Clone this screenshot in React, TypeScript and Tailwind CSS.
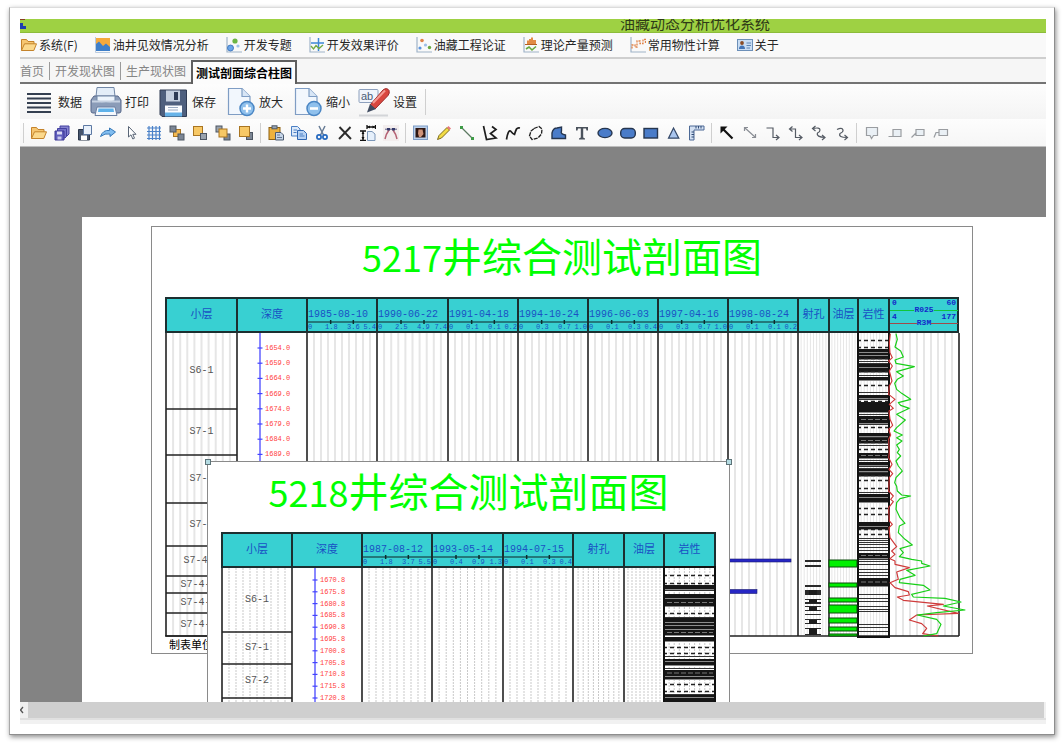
import React from 'react';

/* ---------- menu icons (16 x 16) ---------- */

const Axes = () => <path d="M1 0V15H16" fill="none" stroke="#9fb3c8" strokeWidth="1.2" />;

const FolderShape = () => (
    <>
        <path d="M0.5 13.5V2.5H5.5L7 4.5H13V7" fill="#f6c671" stroke="#c4832b" />
        <path d="M0.5 13.5L3.5 6.8H15.5L12.8 13.5Z" fill="#fbd98d" stroke="#c4832b" />
    </>
);

const menuIcons: Record<string, React.ReactNode> = {
    folder: <FolderShape />,
    wave: (
        <>
            <rect x="1" y="1" width="14" height="13" fill="#f5a93c" />
            <path d="M1 7L4 4.5L8 9L11 6.5L15 10V14H1Z" fill="#3f7fc9" />
            <path d="M0.5 0V15.5H15" fill="none" stroke="#b9cbe0" />
        </>
    ),
    bubbles: (
        <>
            <Axes />
            <circle cx="4.5" cy="11" r="3" fill="#6ba5e8" stroke="#2f6bb8" strokeWidth="0.8" />
            <circle cx="9" cy="4" r="2.6" fill="#6cb544" />
            <circle cx="12" cy="9" r="1.6" fill="#9fc2ea" />
        </>
    ),
    cross: (
        <>
            <Axes />
            <path d="M9.500 1V14M2 6H15" stroke="#3d86d6" strokeWidth="1.5" />
            <path d="M2 9L4.5 12L7 8.5L10 11.5L14 8" fill="none" stroke="#71a944" strokeWidth="1.3" />
        </>
    ),
    dots: (
        <>
            <Axes />
            <circle cx="6" cy="3.5" r="1.8" fill="#e08247" />
            <circle cx="4" cy="11" r="1.6" fill="#5b94dd" />
            <circle cx="9.5" cy="8" r="1.6" fill="#9ebfe6" />
            <circle cx="13.5" cy="10.5" r="1.7" fill="#68a83f" />
        </>
    ),
    bars: (
        <>
            <Axes />
            <path d="M4 7V3.5H6V2H8V0.5H10V3H13V7Z" fill="#e28b45" />
            <path d="M2 7.5H14" stroke="#b35f22" />
            <path d="M3 12L6 10L9 13L13 9.5" fill="none" stroke="#68a83f" strokeWidth="1.6" />
        </>
    ),
    steps: (
        <>
            <Axes />
            <path d="M2 11.5V8H5V10H7V4H10V6.5H13V2.5H15.5V6" fill="none" stroke="#e08247" strokeWidth="1.3" strokeDasharray="2 1" />
        </>
    ),
    card: (
        <>
            <rect x="0.5" y="2.5" width="15" height="11" fill="#c9ddf3" stroke="#6c8fb8" />
            <circle cx="5" cy="6" r="1.9" fill="#8a4b25" />
            <path d="M2 12Q2 8.5 5 8.5Q8 8.5 8 12Z" fill="#4474b5" />
            <path d="M9.5 6H14M9.5 8.5H14M9.5 11H13" stroke="#5d84b4" />
        </>
    ),
};

const menuItems = [
    { icon: 'folder', label: '系统(F)' },
    { icon: 'wave', label: '油井见效情况分析' },
    { icon: 'bubbles', label: '开发专题' },
    { icon: 'cross', label: '开发效果评价' },
    { icon: 'dots', label: '油藏工程论证' },
    { icon: 'bars', label: '理论产量预测' },
    { icon: 'steps', label: '常用物性计算' },
    { icon: 'card', label: '关于' },
];

/* ---------- main toolbar icons (32 x 32) ---------- */

const SheetShape = () => (
    <>
        <path d="M4.5 2.5H18L26 10.5V28.5H4.5Z" fill="#f2f7fd" stroke="#7f9dc4" strokeWidth="1.2" />
        <path d="M18 2.5V10.5H26" fill="#d8e6f6" stroke="#7f9dc4" strokeWidth="1.2" />
        <circle cx="23" cy="22.500" r="7" fill="#8fc0ec" stroke="#4a86c4" strokeWidth="1.5" />
    </>
);

const mainTools = [
    {
        label: '数据',
        icon: <path d="M4 8H28M4 12.500H28M4 17H28M4 21.500H28M4 26H28" stroke="#343f50" strokeWidth="2" />,
    },
    {
        label: '打印',
        icon: (
            <>
                <path d="M7 1.500H24L25.500 15H5.500Z" fill="#e3edf8" stroke="#7187a6" />
                <path d="M4 10H28L31 14V25Q31 27 29 27H3Q1 27 1 25V14Z" fill="#8b9cb8" stroke="#56678a" />
                <path d="M7 10H25V15Q16 18 7 15Z" fill="#edf4fc" stroke="#7187a6" />
                <path d="M2 15.500H30" stroke="#c7d2e2" strokeWidth="2" />
                <path d="M7 21H25L27 29.500H5Z" fill="#f5f9fe" stroke="#6a7fa2" />
                <path d="M8.500 22.500H23.500L24 26H8Z" fill="#5fb2ea" />
            </>
        ),
    },
    {
        label: '保存',
        icon: (
            <>
                <path d="M3 4H29.500V30.500H5L3 28.500Z" fill="#4e5f7e" stroke="#2f3b53" />
                <rect x="9" y="4.500" width="14" height="11" fill="#c5d0e0" />
                <rect x="17" y="6" width="4" height="8" fill="#2e3b55" />
                <path d="M8 19.500H25V30H8Z" fill="#fafcff" />
                <path d="M8 26.500H25V30.500H8Z" fill="#66b3e8" />
                <path d="M11 21.500H21M11 24H21" stroke="#9aaac2" />
            </>
        ),
    },
    {
        label: '放大',
        icon: (
            <>
                <SheetShape />
                <path d="M23 18.500V26.500M19 22.500H27" stroke="#fff" strokeWidth="2.4" />
            </>
        ),
    },
    {
        label: '缩小',
        icon: (
            <>
                <SheetShape />
                <path d="M19 22.500H27" stroke="#fff" strokeWidth="2.6" />
            </>
        ),
    },
    {
        label: '设置',
        icon: (
            <>
                <rect x="1" y="3.500" width="19" height="13" rx="1" fill="#f1f5fb" stroke="#8da0bd" />
                <text x="3" y="14" fontSize="11" fontFamily="Liberation Sans" fill="#4c5c78">ab</text>
                <path d="M12 19L25 4Q29 1 31 4.500Q32 7 30 9.500L17 23Z" fill="#d9473f" stroke="#9c2b2a" />
                <path d="M15 17L27 4.500" stroke="#f59a92" strokeWidth="2" />
                <path d="M12 18L18 23L9 26.500Z" fill="#3f4b60" />
                <path d="M1 29.500H30" stroke="#d3d5d8" strokeWidth="2" />
            </>
        ),
    },
];

/* ---------- drawing toolbar icons (16 x 16) ---------- */

const Stacked: React.FC<{ front: number }> = ({ front }) => (
    <>
        {front === 0 && (
            <>
                <rect x="4.500" y="4.500" width="7" height="7" fill="#f3b951" stroke="#a97521" />
                <rect x="1" y="1" width="6" height="6" fill="#7c8694" stroke="#4d5663" />
                <rect x="9" y="9" width="6" height="6" fill="#7c8694" stroke="#4d5663" />
            </>
        )}
        {front === 1 && (
            <>
                <rect x="1.500" y="1.500" width="9" height="9" fill="#f7c865" stroke="#a97521" />
                <rect x="8.500" y="8.500" width="6" height="6" fill="#9aa3ae" stroke="#4d5663" />
            </>
        )}
        {front === 2 && (
            <>
                <rect x="1" y="1" width="6" height="6" fill="#9aa3ae" stroke="#4d5663" />
                <rect x="9" y="9" width="6" height="6" fill="#7c8694" stroke="#4d5663" />
                <rect x="4" y="4" width="8" height="8" fill="#f7c865" stroke="#a97521" />
            </>
        )}
        {front === 3 && (
            <>
                <rect x="8.500" y="7.500" width="6" height="7" fill="#7c8694" stroke="#4d5663" />
                <rect x="1.500" y="1.500" width="10" height="10" fill="#f7c865" stroke="#a97521" />
            </>
        )}
    </>
);

const blueFill = { fill: '#4a7cc9', stroke: '#26364f', strokeWidth: 1.4 };
const darkLine = { fill: 'none', stroke: '#1d1d1d', strokeWidth: 1.7 };
const linkLine = { fill: 'none', stroke: '#555b64', strokeWidth: 1.2 };
const noteLine = { fill: '#eaf0f5', stroke: '#9a9da1', strokeWidth: 1.2 };

const drawGroups: { name: string; icon: React.ReactNode }[][] = [
    [
        { name: '打开', icon: <FolderShape /> },
        {
            name: '全部保存',
            icon: (
                <>
                    <path d="M6 1H15V9L13 11H6Z" fill="#8583cf" stroke="#4340a0" />
                    <path d="M3.500 3.500H12.500V11.500L11 13H3.500Z" fill="#7270c8" stroke="#4340a0" />
                    <path d="M1 6H10V15H1Z" fill="#5f5dbd" stroke="#3a3794" />
                    <rect x="3" y="6.500" width="5" height="3" fill="#dcdcf5" />
                    <rect x="3.500" y="11.500" width="4" height="3" fill="#c6c6ec" />
                </>
            ),
        },
        {
            name: '另存为',
            icon: (
                <>
                    <path d="M1.500 4.500H12.500V15H1.500Z" fill="#47566e" stroke="#2b3649" />
                    <rect x="4" y="10.500" width="6" height="4.500" fill="#fff" />
                    <path d="M6.500 0.500H14.500V9.500H6.500Z" fill="#e9f1fb" stroke="#5d79a3" />
                </>
            ),
        },
        { name: '重做', icon: <path d="M0.500 11.500Q3 4.500 9.500 5.500V3L15.500 7L10 11.500V9Q5 8 0.500 11.500Z" fill="#80bdf0" stroke="#3779b8" /> },
        { name: '选择', icon: <path d="M5.500 1.500V12L8 9.800L9.800 14L11.500 13.200L9.800 9.300H13Z" fill="#fff" stroke="#5a6677" /> },
        { name: '网格', icon: <path d="M1 3H15M1 6.500H15M1 10H15M1 13.500H15M3 1V15M6.500 1V15M10 1V15M13.500 1V15" stroke="#4b82c9" strokeWidth="1.200" /> },
        { name: '置于底层', icon: <Stacked front={0} /> },
        { name: '上移', icon: <Stacked front={1} /> },
        { name: '下移', icon: <Stacked front={2} /> },
        { name: '置于顶层', icon: <Stacked front={3} /> },
    ],
    [
        {
            name: '粘贴',
            icon: (
                <>
                    <rect x="1" y="2.500" width="11" height="12" fill="#edb13d" stroke="#8e6113" />
                    <rect x="4" y="0.800" width="5" height="3" fill="#9aa7b6" stroke="#4e5966" />
                    <path d="M7.500 7.500H13L15.500 10V15H7.500Z" fill="#c6d5e8" stroke="#4b5a70" />
                    <path d="M9 10H12M9 12.500H14" stroke="#647690" />
                </>
            ),
        },
        {
            name: '复制',
            icon: (
                <>
                    <path d="M0.500 1.500H6.500L9 4V11H0.500Z" fill="#dce9f9" stroke="#4b7fc4" />
                    <path d="M6.500 5.500H12.500L15.500 8.500V14.500H6.500Z" fill="#b7d2f3" stroke="#2f67b3" />
                    <path d="M8.500 9H12M8.500 11H13.500M2.500 5H6M2.500 7.500H5.500" stroke="#4b7fc4" />
                </>
            ),
        },
        {
            name: '剪切',
            icon: (
                <>
                    <path d="M5 1L9.500 10M11 1L6.500 10" stroke="#687c96" strokeWidth="1.500" />
                    <circle cx="5" cy="12" r="2.100" fill="none" stroke="#2468be" strokeWidth="1.700" />
                    <circle cx="11" cy="12" r="2.100" fill="none" stroke="#2468be" strokeWidth="1.700" />
                </>
            ),
        },
        { name: '删除', icon: <path d="M2.500 2L14 14M13.500 2L2 14" stroke="#2c2c2c" strokeWidth="1.900" /> },
        {
            name: '尺寸',
            icon: (
                <>
                    <path d="M7.500 6.500H12L15 9V15.500H7.500Z" fill="#e6f0fb" stroke="#7c97b8" />
                    <path d="M7 0V4M15.500 0V4M7 2H15.500M0 6H6M0 15.500H6M3 6V15.500" stroke="#111" strokeWidth="1.300" />
                    <path d="M7.500 2L10 0.500V3.500ZM15 2L12.500 0.500V3.500ZM3 15L1.500 12H4.500ZM3 6.500L1.500 9H4.500Z" fill="#111" />
                </>
            ),
        },
        {
            name: '节点',
            icon: (
                <>
                    <rect width="16" height="16" fill="#f3eeee" />
                    <path d="M2 14Q3 9 6 5M14 14Q13 9 10 5" fill="none" stroke="#b56173" strokeWidth="1.500" />
                    <path d="M4 3H7V5.500H4ZM9 3H12V5.500H9Z" fill="#353a6a" />
                    <path d="M2 4.200H14" stroke="#353a6a" strokeWidth="0.800" />
                </>
            ),
        },
    ],
    [
        {
            name: '图片',
            icon: (
                <>
                    <rect x="0.500" y="1" width="14" height="13.500" fill="#bcd0ea" stroke="#7d9cc6" />
                    <rect x="2.500" y="3" width="10" height="9.500" fill="#2e1712" />
                    <path d="M5.500 4.500H9.500L10.500 9L8 12H6L5 8.500Z" fill="#cf9379" />
                </>
            ),
        },
        {
            name: '铅笔',
            icon: (
                <>
                    <path d="M1.500 14.500L3 10.500L11 2.500L13.500 5L5.500 13Z" fill="#f2dc45" stroke="#7d6b1d" />
                    <path d="M11 2.500L12.500 1L15 3.500L13.500 5Z" fill="#e8787e" />
                </>
            ),
        },
        {
            name: '直线',
            icon: (
                <>
                    <path d="M2.500 2.500L13.500 13.500" stroke="#5c7a62" strokeWidth="1.300" />
                    <path d="M1 1H4V4H1ZM12 12H15V15H12Z" fill="#3e9b47" />
                </>
            ),
        },
        { name: '折线', icon: <path d="M1.500 1L4.500 14.500L14 13L8.500 8.500L14 4.500L10 1.500" {...darkLine} /> },
        { name: '曲线', icon: <path d="M1.500 14.500Q3 5 5.500 6Q8 9 9.500 9.500Q10.500 6 11.500 4Q12.500 2.500 15 3" {...darkLine} /> },
        { name: '闭合曲线', icon: <path d="M6 3.500L11 1.500L14 4L13.500 9L10 13L4 14.500L1.500 11L3 6Z" {...darkLine} strokeWidth={1.3} strokeDasharray="4 1" /> },
        { name: '多边形', icon: <path d="M1 13.500V8Q2 3 6 3L10.500 2V6Q9 9 14.500 10V13.500Z" {...blueFill} /> },
        { name: '文本', icon: <path d="M2 2H14V5.500H12.500L12 3.500H9.200V12.500L11 13.500V14.500H5V13.500L6.800 12.500V3.500H4L3.500 5.500H2Z" fill="#4b525c" /> },
        { name: '椭圆', icon: <ellipse cx="8" cy="8" rx="7" ry="4.600" {...blueFill} /> },
        { name: '圆角矩形', icon: <rect x="0.700" y="3.500" width="14.600" height="9.500" rx="4" {...blueFill} /> },
        { name: '矩形', icon: <rect x="1" y="3.500" width="13.500" height="9.500" {...blueFill} /> },
        { name: '三角形', icon: <path d="M7.500 3L12.800 13.200H2.500Z" fill="#a9c5ee" stroke="#344868" strokeWidth="1.200" /> },
        {
            name: '标尺',
            icon: (
                <>
                    <path d="M0.500 1H15V5H5V15H0.500Z" fill="#d3e0f2" stroke="#4c6996" />
                    <path d="M7 1V3.500M9.500 1V3.500M12 1V3.500M2.500 7H5M2.500 9.500H5M2.500 12H5" stroke="#2f4a75" />
                </>
            ),
        },
    ],
    [
        {
            name: '箭头',
            icon: (
                <>
                    <path d="M4 4L13.500 13.500" stroke="#111" strokeWidth="2.200" />
                    <path d="M1.500 1.500H8.500L1.500 8.500Z" fill="#111" />
                </>
            ),
        },
        { name: '连接线', icon: <path d="M3 3L13 12M2.500 6V2.500H6M13.500 9V12.500H10" {...linkLine} stroke="#8a8e95" /> },
        { name: '直角连接', icon: <path d="M1.500 3H8V12.500H13.500M11 10L14 12.500L11 15" {...linkLine} /> },
        { name: '双向直角连接', icon: <path d="M2 4H7.500V12.500H13.500M11 10L14 12.500L11 15M4.500 1.500L1.500 4L4.500 6.500" {...linkLine} /> },
        { name: '双向曲线连接', icon: <path d="M2 3.500Q9 2 9 5Q9 7 6.500 8Q5 12 14 12.500M11 10L14 12.500L11 15M4.500 1L1.500 3.500L4.500 6" {...linkLine} /> },
        { name: '曲线连接', icon: <path d="M3 4.500Q8 2 9 5Q9.500 7 6 8.500Q4 12.500 13 12.500M10.500 10L13.500 12.500L10.500 15" {...linkLine} /> },
    ],
    [
        { name: '标注一', icon: <path d="M2.500 2.500H13.500V10.500H9.500L7.500 13.500L6 10.500H2.500Z" {...noteLine} /> },
        { name: '标注二', icon: <path d="M6 4.500H14V11.500H1.500H6Z" {...noteLine} /> },
        { name: '标注三', icon: <path d="M6 4.500H14V10.500H6ZM6 8L1.500 12.500" {...noteLine} /> },
        { name: '标注四', icon: <path d="M6 4.500H14.500V10.500H6ZM6 7.500H3L1 12.500" {...noteLine} /> },
    ],
];

/* ---------- well section data ---------- */

type HeadCell =
    | { kind: 'name'; text: string }
    | { kind: 'test'; date: string; scale: string[] }
    | { kind: 'curves' };

interface Lithology {
    column: number;
    dashes: number[];
    lines: number[];
    bands: number[][];
}

interface Section {
    well: string;
    widths: number[];
    template: string;
    head: HeadCell[];
    height: number;
    gridStroke: string;
    gridDash?: string;
    gridWidth: number;
    strata: { name: string; from: number; to: number }[];
    depths: { first: number; y: number; step: number; count: number; fraction: string };
    lithology: Lithology;
}

const name = (text: string): HeadCell => ({ kind: 'name', text });
const test = (date: string, ...scale: string[]): HeadCell => ({ kind: 'test', date, scale });

const well5217: Section = {
    well: '5217',
    widths: [71, 70, 70, 71, 70, 70, 70, 70, 70, 31, 29, 31, 70],
    template: 'grid-cols-[71px_70px_70px_71px_70px_70px_70px_70px_70px_31px_29px_31px_70px]',
    head: [
        name('小层'),
        name('深度'),
        test('1985-08-10', '1.8', '3.6', '5.4'),
        test('1990-06-22', '2.5', '4.9', '7.4'),
        test('1991-04-18', '0.1', '0.1', '0.2'),
        test('1994-10-24', '0.3', '0.7', '1.0'),
        test('1996-06-03', '0.1', '0.3', '0.4'),
        test('1997-04-16', '0.3', '0.7', '1.0'),
        test('1998-08-24', '0.1', '0.1', '0.2'),
        name('射孔'),
        name('油层'),
        name('岩性'),
        { kind: 'curves' },
    ],
    height: 303,
    gridStroke: '#e6e6e6',
    gridWidth: 2,
    strata: [
        { name: 'S6-1', from: 0, to: 76 },
        { name: 'S7-1', from: 76, to: 122 },
        { name: 'S7-2', from: 122, to: 170 },
        { name: 'S7-3', from: 170, to: 213 },
        { name: 'S7-4-1', from: 213, to: 243 },
        { name: 'S7-4-21', from: 243, to: 260 },
        { name: 'S7-4-22', from: 260, to: 280 },
        { name: 'S7-4-23', from: 280, to: 303 },
    ],
    depths: { first: 1654, y: 15, step: 15.2, count: 8, fraction: '0' },
    lithology: {
        column: 11,
        dashes: [7, 14, 25, 38, 52, 68, 94, 109, 116, 142, 147, 155, 175, 181, 196, 201],
        lines: [17, 28, 30, 42, 47, 59, 62, 66, 81, 91, 101, 104, 106, 112, 127, 133, 135, 139, 159, 169, 193, 205, 207, 209, 211, 214, 217, 226, 228, 231, 236, 239, 242, 261, 265, 268, 273, 276, 278, 291, 294, 298],
        bands: [[16, 3], [20, 2], [23, 3], [31, 3], [35, 4], [44, 3], [62, 3], [69, 10], [83, 7], [100, 3], [105, 5], [120, 5], [129, 3], [136, 2], [140, 3], [161, 3], [165, 4], [189, 4], [194, 2], [220, 5], [245, 8]],
    },
};

const well5218: Section = {
    well: '5218',
    widths: [70, 70, 70, 71, 70, 51, 40, 51],
    template: 'grid-cols-[70px_70px_70px_71px_70px_51px_40px_51px]',
    head: [
        name('小层'),
        name('深度'),
        test('1987-08-12', '1.8', '3.7', '5.5'),
        test('1993-05-14', '0.4', '0.9', '1.3'),
        test('1994-07-15', '0.1', '0.3', '0.4'),
        name('射孔'),
        name('油层'),
        name('岩性'),
    ],
    height: 160,
    gridStroke: '#c9c9c9',
    gridDash: '2 1',
    gridWidth: 1,
    strata: [
        { name: 'S6-1', from: 0, to: 64 },
        { name: 'S7-1', from: 64, to: 96 },
        { name: 'S7-2', from: 96, to: 130 },
    ],
    depths: { first: 1670, y: 12, step: 11.8, count: 11, fraction: '8' },
    lithology: {
        column: 7,
        dashes: [7, 15, 45, 79, 85, 116, 123],
        lines: [22, 49, 88, 92, 100, 126],
        bands: [[17, 4], [26, 4], [31, 7], [50, 4], [55, 2], [58, 3], [62, 5], [69, 4], [91, 2], [94, 3], [102, 6], [109, 2], [127, 2], [130, 4], [136, 6]],
    },
};

// three units to the pixel, origin at the top left of the curve column
const resistivityCurve =
    'M24 2L28 19L21 42L38 54L46 72L21 81L24 91L79 101L26 116L46 129L28 139L20 151L26 169L41 181L68 199L31 209L38 217L64 226L26 244L52 261L26 284L18 294L43 306L26 314L42 324L26 336L34 349L28 359L38 369L24 384L31 399L43 414L24 434L20 449L26 460L28 474L41 486L68 489L36 497L26 509L24 529L36 554L51 571L34 579L31 599L51 619L73 636L36 647L46 659L34 671L71 679L101 684L101 691L126 699L56 712L81 727L36 739L34 749L106 757L126 771L71 784L76 792L171 796L219 807L166 819L231 831L146 839L88 846L146 859L159 874L146 902L106 909';
const microCurve =
    'M7 2L4 29L6 59L13 74L2 84L13 99L4 114L12 144L4 159L2 184L21 199L4 214L16 226L3 234L6 259L14 277L2 289L8 306L2 319L4 359L2 374L12 394L3 409L14 422L4 434L2 474L16 489L8 499L16 506L2 524L4 564L13 574L3 584L6 614L26 641L11 654L21 664L6 677L21 684L21 694L64 704L26 717L31 739L6 749L21 764L61 776L64 786L28 792L46 802L166 814L118 819L211 841L86 846L64 861L101 872L116 886L104 902L151 909';

const perforations = [[227, 2], [232, 2], [252, 2], [257, 5], [266, 1], [269, 2], [273, 1], [277, 1], [281, 1], [286, 1], [290, 1], [295, 1], [301, 1]];
const perforationCores = [[257, 5], [266, 4], [274, 4], [287, 4], [295, 7]];
const oilLayers = [[227, 7], [250, 4], [265, 4], [272, 8], [285, 5], [294, 4], [301, 2]];

/* ---------- section chart ---------- */

const HeaderCell: React.FC<{ cell: HeadCell }> = ({ cell }) => {
    if (cell.kind === 'name') {
        return <div className="flex items-center justify-center border-l-2 border-[#1c2f30] pb-1 text-[11px] text-[#1a50c4]">{cell.text}</div>;
    }
    if (cell.kind === 'test') {
        return (
            <div className="flex flex-col border-l-2 border-[#1c2f30] pt-[11px] font-['Liberation_Mono'] text-[#1a50c4]">
                <span className="text-[10px] leading-[10px]">{cell.date}</span>
                <svg viewBox="0 0 69 4" className="h-1 w-full shrink-0" preserveAspectRatio="none">
                    <path d="M0 2H69" stroke="#1c5c5e" strokeWidth="1.5" />
                    <path d="M23 0V4M46 0V4" stroke="#0d2b2c" strokeWidth="1.5" />
                </svg>
                <div className="grid grid-cols-[17px_22px_1fr_auto] text-[7px] leading-[7px]">
                    <span>0</span>
                    {cell.scale.map((value, i) => <span key={i}>{value}</span>)}
                </div>
            </div>
        );
    }
    return (
        <div className="border-l-2 border-[#1c2f30] font-['Liberation_Mono'] text-[8px] font-bold leading-[8px] text-[#1327c9]">
            <div className="flex justify-between px-0.5"><span>0</span><span>60</span></div>
            <div className="-mt-px flex items-center"><i className="h-px flex-1 bg-[#10c63a]" />R025<i className="h-px flex-1 bg-[#10c63a]" /></div>
            <div className="-mt-px flex justify-between px-0.5"><span>4</span><span>177</span></div>
            <div className="-mt-0.5 flex items-center"><i className="h-px flex-1 bg-[#a04a4a]" />R3M<i className="h-px flex-1 bg-[#a04a4a]" /></div>
        </div>
    );
};

const LithologyColumn: React.FC<{ x: number; width: number; height: number; data: Lithology }> = ({ x, width, height, data }) => (
    <g>
        {data.lines.map(y => <path key={y} d={`M${x} ${y + 0.5}h${width}`} stroke="#333" />)}
        {data.bands.map(([y, h]) => (
            <g key={y}>
                <rect x={x} y={y} width={width} height={h} fill="#161616" />
                <path d={`M${x} ${y + h + 0.5}h${width}`} stroke="#8c8c8c" />
                {h > 4 && h < 9 && <path d={`M${x + 3} ${y + h / 2}h${width - 5}`} stroke="#777" strokeDasharray="5 2" />}
            </g>
        ))}
        {data.dashes.map(y => <path key={y} d={`M${x - 1} ${y + 0.5}h${width + 2}`} stroke="#222" strokeWidth="1.3" strokeDasharray="4 3" />)}
        <rect x={x} y={-1} width={width} height={height + 2} fill="none" stroke="#111" strokeWidth="2" />
    </g>
);

const SectionChart: React.FC<{ section: Section; children?: React.ReactNode }> = ({ section, children }) => {
    const { widths, height, strata, depths, lithology } = section;
    const starts = widths.map((_, i) => widths.slice(0, i).reduce((a, b) => a + b, 0) + 1);
    const total = widths.reduce((a, b) => a + b, 0);
    const axis = starts[1] + 23;

    return (
        <>
            <h2 className="h-[70px] shrink-0 text-center text-[40px] leading-[56px] text-[#00ff00]">
                <span className="text-[36px]">{section.well}</span>井综合测试剖面图
            </h2>
            <div className={`grid h-[36px] shrink-0 border-y-2 border-r-2 border-[#1c2f30] bg-[#38d0d2] ${section.template}`}>
                {section.head.map((cell, i) => <HeaderCell key={i} cell={cell} />)}
            </div>
            <svg width={total + 2} height={height} className="shrink-0 overflow-visible">
                {widths.map((w, i) => i !== 1 && (
                    <path
                        key={i}
                        d={Array.from({ length: 9 }, (_, n) => `M${starts[i] + ((n + 1) * w) / 10} 0V${height}`).join('')}
                        stroke={section.gridStroke}
                        strokeWidth={w < 50 ? 1 : section.gridWidth}
                        strokeDasharray={section.gridDash}
                    />
                ))}

                {strata.map(layer => (
                    <g key={layer.name}>
                        <path d={`M${starts[0]} ${layer.to}H${starts[1]}`} stroke="#222" strokeWidth="1.5" />
                        <text
                            x={starts[0] + widths[0] / 2}
                            y={(layer.from + layer.to) / 2 + 2}
                            textAnchor="middle"
                            fontSize="10"
                            fontFamily="Liberation Mono"
                            fill="#555"
                        >
                            {layer.name}
                        </text>
                    </g>
                ))}

                <path d={`M${axis} 0V${height}`} stroke="#6161ff" strokeWidth="1.5" />
                {Array.from({ length: depths.count }, (_, n) => {
                    const y = depths.y + n * depths.step;
                    return (
                        <g key={n}>
                            <path d={`M${axis - 2.5} ${y}h5`} stroke="#4444ff" strokeWidth="1.2" />
                            <text x={axis + 5} y={y + 2} fontSize="7" fontFamily="Liberation Mono" fill="#ff4040">
                                {`${depths.first + n * 5}.${depths.fraction}`}
                            </text>
                        </g>
                    );
                })}

                {starts.map(x => <path key={x} d={`M${x} 0V${height}`} stroke="#222" strokeWidth="1.6" />)}
                <path d={`M${total + 1} 0V${height}M0 ${height}H${total + 1}`} stroke="#222" strokeWidth="1.6" />
                <LithologyColumn x={starts[lithology.column]} width={widths[lithology.column]} height={height} data={lithology} />
                {children}
            </svg>
        </>
    );
};

const TestResults = () => (
    <>
        <rect x="563" y="226" width="63" height="3" fill="#2626c4" stroke="#1b1b70" strokeWidth="0.600" />
        <rect x="563" y="256.500" width="29" height="4" fill="#2626c4" stroke="#1b1b70" strokeWidth="0.600" />
        {perforations.map(([y, h]) => <rect key={y} x="640" y={y} width="16" height={h} fill="#2a2a2a" />)}
        {perforationCores.map(([y, h]) => <rect key={y} x="644" y={y} width="8" height={h} fill="#1c1c1c" />)}
        {oilLayers.map(([y, h]) => <rect key={y} x="664" y={y} width="28" height={h} fill="#00f000" stroke="#0b4a0b" />)}
        <svg x="723" y="0" width="70" height="303" viewBox="0 0 210 909" className="overflow-visible">
            <path d={microCurve} fill="none" stroke="#cf3b3b" strokeWidth="3.500" strokeLinejoin="round" />
            <path d={resistivityCurve} fill="none" stroke="#17cf17" strokeWidth="3.500" strokeLinejoin="round" />
        </svg>
    </>
);

/* ---------- window ---------- */

const tabs = ['首页', '开发现状图', '生产现状图'];

const Separator = () => <span className="mx-[3px] h-5 w-px bg-[#cfcfcf]" />;

export default function App() {
    return (
        <div className="h-screen bg-white px-[9px] pt-[7px] pb-3 font-['Noto_Sans_CJK_SC',sans-serif] text-xs text-[#262626]">
            <div className="flex h-full flex-col border border-t-[#dcdcdc] border-r-[#8e8e8e] border-b-[#8e8e8e] border-l-[#a8a8a8] bg-white pt-[11px] pr-2 pb-2.5 pl-2.5 shadow-[1px_2px_5px_rgba(0,0,0,0.45)]">
                <header className="flex h-[14px] shrink-0 items-end overflow-hidden border-b border-[#8cbc3a] bg-[#9ed143]">
                    <svg viewBox="0 0 6 11" className="h-[11px] w-1.5 shrink-0 self-start">
                        <path d="M0 0H5V1H0Z" fill="#8a3f22" />
                        <path d="M0 4H3V7H6V10H0Z" fill="#1c3fae" />
                    </svg>
                    <h1 className="pl-[594px] text-[15px] leading-[18px] whitespace-nowrap text-[#2e3b17]">油藏动态分析优化系统</h1>
                </header>

                <nav className="flex h-[26px] shrink-0 items-center gap-[17px] border-b-2 border-[#cfcfcf] bg-[#f9f9f9] pl-px">
                    {menuItems.map(item => (
                        <button key={item.label} className="flex items-center gap-0.5 whitespace-nowrap">
                            <svg viewBox="0 0 16 16" className="size-4">{menuIcons[item.icon]}</svg>
                            {item.label}
                        </button>
                    ))}
                </nav>

                <div role="tablist" className="flex h-[25px] shrink-0 items-end border-b-2 border-[#747474] bg-[#f6f6f6]">
                    {tabs.map((tab, i) => (
                        <React.Fragment key={tab}>
                            {i > 0 && <span className="mx-[5px] mb-0.5 h-[18px] w-px bg-[#9a9a9a]" />}
                            <button role="tab" aria-selected="false" className="h-[22px] whitespace-nowrap text-[#858585]">{tab}</button>
                        </React.Fragment>
                    ))}
                    <button role="tab" aria-selected="true" className="-mb-0.5 ml-[5px] h-6 border-2 border-b-0 border-[#5f5f5f] bg-[#fcfcfc] px-[3px] font-bold whitespace-nowrap text-black">
                        测试剖面综合柱图
                    </button>
                </div>

                <div className="flex h-[35px] shrink-0 items-center gap-2 bg-linear-to-b from-[#fdfdfd] to-[#f4f4f4] pl-[3px]">
                    {mainTools.map(tool => (
                        <button key={tool.label} className="flex items-center gap-[3px] whitespace-nowrap">
                            <svg viewBox="0 0 32 32" className="size-8">{tool.icon}</svg>
                            {tool.label}
                        </button>
                    ))}
                    <span className="h-[26px] w-px bg-[#cfcfcf]" />
                </div>

                <div className="flex h-[28px] shrink-0 items-center border-b border-[#bdbdbd] bg-linear-to-b from-[#fdfdfd] to-[#f6f6f6]">
                    {drawGroups.map((group, i) => (
                        <React.Fragment key={i}>
                            <Separator />
                            {group.map(tool => (
                                <button key={tool.name} aria-label={tool.name} className="flex w-[23px] justify-center">
                                    <svg viewBox="0 0 16 16" className="size-4">{tool.icon}</svg>
                                </button>
                            ))}
                        </React.Fragment>
                    ))}
                </div>

                <main className="flex min-h-0 flex-1 overflow-hidden bg-[#838383] pt-[70px] pl-[62px]">
                    <div className="relative flex-1 bg-white">
                        <figure className="absolute top-[9px] left-[69px] flex h-[428px] w-[822px] flex-col border border-[#8a8a8a] bg-white px-[13px]">
                            <SectionChart section={well5217}>
                                <TestResults />
                            </SectionChart>
                            <figcaption className="pl-1 text-[11px] leading-[16px] text-black">制表单位:</figcaption>
                        </figure>
                        <figure className="absolute top-[244px] left-[125px] flex h-[427px] w-[523px] flex-col border border-[#8a8a8a] bg-white px-[13px]">
                            <SectionChart section={well5218} />
                            <span className="absolute -top-[3px] -left-[3px] size-1.5 border border-[#5d7378] bg-[#b4dbe2]" />
                            <span className="absolute -top-[3px] -right-[3px] size-1.5 border border-[#5d7378] bg-[#b4dbe2]" />
                        </figure>
                    </div>
                </main>

                <div className="flex h-4 shrink-0 items-center bg-[#f0f0f0] pr-0.5">
                    <button aria-label="向左滚动" className="w-2">
                        <svg viewBox="0 0 8 8" className="size-2"><path d="M3 1L0.500 4L3 7" fill="none" stroke="#555" strokeWidth="1.300" /></svg>
                    </button>
                    <div className="h-full flex-1 bg-[#cfcfcf]" />
                </div>
                <div className="h-1.5 shrink-0 border-t-2 border-[#e0e0e0] bg-[#f1f1f1]" />
            </div>
        </div>
    );
}
